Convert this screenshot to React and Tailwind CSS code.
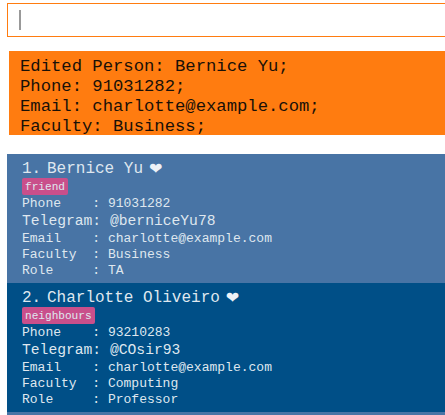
const people = [
  {
    name: 'Bernice Yu',
    tag: 'friend',
    phone: '91031282',
    telegram: '@berniceYu78',
    email: 'charlotte@example.com',
    faculty: 'Business',
    role: 'TA',
    background: 'bg-[#4874a5]',
  },
  {
    name: 'Charlotte Oliveiro',
    tag: 'neighbours',
    phone: '93210283',
    telegram: '@COsir93',
    email: 'charlotte@example.com',
    faculty: 'Computing',
    role: 'Professor',
    background: 'bg-[#004f87]',
  },
];

function Field({ label, value }) {
  return <div className="h-4 text-[13.03px] leading-4">{label.padEnd(9) + ': ' + value}</div>;
}

function PersonCard({ person, index }) {
  return (
    <article className={`h-[129px] shrink-0 whitespace-pre pt-[5px] pl-[15px] text-[#dfe7ef] ${person.background}`}>
      <div className="flex h-[19px] text-base leading-5">
        <span className="w-[25px]">{index}.</span>
        <span>{person.name}</span>
        <span className="ml-[6px] font-['DejaVu_Sans',sans-serif] text-[#eef2f7]">❤</span>
      </div>
      <div className="h-[17px] w-fit rounded-[2px] bg-[#c94f8b] px-[3px] text-[11.1px] leading-[19px]">{person.tag}</div>
      <div className="pt-px">
        <Field label="Phone" value={person.phone} />
      </div>
      <div className="h-[19px] text-[14.67px] leading-[19px]">{'Telegram: ' + person.telegram}</div>
      <Field label="Email" value={person.email} />
      <Field label="Faculty" value={person.faculty} />
      <Field label="Role" value={person.role} />
    </article>
  );
}

export default function App() {
  return (
    <main className="flex h-[415px] w-[445px] flex-col overflow-hidden bg-white pt-[3px] pl-[7px] font-['Liberation_Mono',monospace]">
      <div className="h-[34px] shrink-0 border border-r-0 border-[#ff7c10] pt-[6px] pl-[11px]">
        <div className="h-5 w-0.5 bg-[#999999]" />
      </div>
      <div className="mt-[14px] ml-[2px] h-[84px] shrink-0 whitespace-pre bg-[#ff7c10] pt-[6px] pl-[11px] text-[17.23px] leading-5 text-[#181008]">
        <div>Edited Person: Bernice Yu;</div>
        <div>Phone: 91031282;</div>
        <div>Email: charlotte@example.com;</div>
        <div className="h-[18px]">Faculty: Business;</div>
      </div>
      <section className="mt-[19px] flex h-[261px] shrink-0 flex-col overflow-hidden bg-[#4874a5]">
        {people.map((person, i) => (
          <PersonCard key={person.name} person={person} index={i + 1} />
        ))}
      </section>
    </main>
  );
}
